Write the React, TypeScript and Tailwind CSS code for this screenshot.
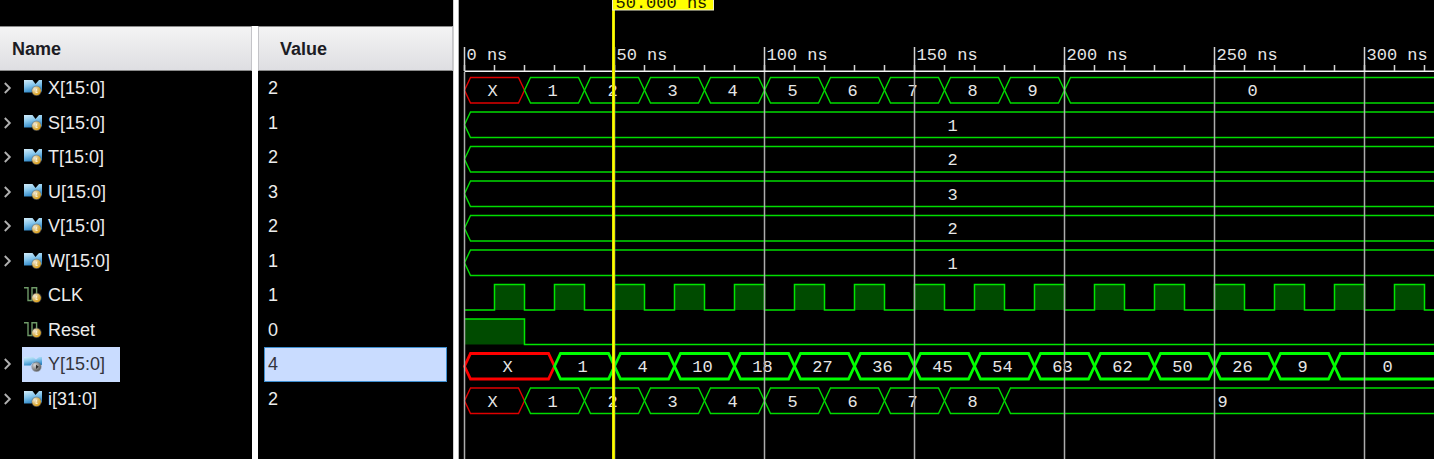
import { useState } from "react";

type Kind = "bus" | "output" | "scalar";
type Segment = [start: number, label: string];

interface Signal {
  name: string;
  value: string;
  kind: Kind;
  segments?: Segment[];
  pulses?: [number, number][];
}

const clockPulses = Array.from({ length: 17 }, (_, i): [number, number] => [10 + i * 20, 20 + i * 20]);

const signals: Signal[] = [
  {
    name: "X[15:0]", value: "2", kind: "bus",
    segments: [[0, "X"], [20, "1"], [40, "2"], [60, "3"], [80, "4"], [100, "5"], [120, "6"], [140, "7"], [160, "8"], [180, "9"], [200, "0"]],
  },
  { name: "S[15:0]", value: "1", kind: "bus", segments: [[0, "1"]] },
  { name: "T[15:0]", value: "2", kind: "bus", segments: [[0, "2"]] },
  { name: "U[15:0]", value: "3", kind: "bus", segments: [[0, "3"]] },
  { name: "V[15:0]", value: "2", kind: "bus", segments: [[0, "2"]] },
  { name: "W[15:0]", value: "1", kind: "bus", segments: [[0, "1"]] },
  { name: "CLK", value: "1", kind: "scalar", pulses: clockPulses },
  { name: "Reset", value: "0", kind: "scalar", pulses: [[0, 20]] },
  {
    name: "Y[15:0]", value: "4", kind: "output",
    segments: [[0, "X"], [30, "1"], [50, "4"], [70, "10"], [90, "18"], [110, "27"], [130, "36"], [150, "45"], [170, "54"], [190, "63"], [210, "62"], [230, "50"], [250, "26"], [270, "9"], [290, "0"]],
  },
  {
    name: "i[31:0]", value: "2", kind: "bus",
    segments: [[0, "X"], [20, "1"], [40, "2"], [60, "3"], [80, "4"], [100, "5"], [120, "6"], [140, "7"], [160, "8"], [180, "9"]],
  },
];

// Time axis: 3px per nanosecond, starting a little inside the wave pane.
const ORIGIN = 5.5;
const VIEW_END = 326;
const FAR = 4000;
const ROW_TOP = 77.5;
const ROW_PITCH = 34.5;
const WAVE_HEIGHT = 25.5;
const CURSOR = 50;
const xAt = (ns: number) => ORIGIN + ns * 3;

function SignalIcon({ kind }: { kind: Kind }) {
  const badge = kind === "output" ? "url(#badge-gray)" : "url(#badge-gold)";
  return (
    <svg width="18" height="18" viewBox="0 0 18 18" className="shrink-0" aria-hidden="true">
      {kind === "bus" && <path d="M0 1H8.5L11.5 5L15 1H18V12.5H12L10.5 10L7.5 13.5H0Z" fill="url(#bus-blue)" />}
      {kind === "output" && <path d="M0 2H9L12 4.5L15 2H18V10H12L9 7.5L6.5 10.5H0Z" fill="url(#bus-blue)" />}
      {kind === "scalar" && <path d="M0 1.7H4V14.5H8V1.7H12.6V9" fill="none" stroke="#6f9a68" strokeWidth="1.4" />}
      <circle cx="12.5" cy="11.8" r="5.2" fill="#6f6f6f" opacity=".55" />
      <circle cx="12.5" cy="11.8" r="4.4" fill={badge} />
      {kind === "output" ? (
        <path d="M12 9.8L14.8 11.8L12 14Z" fill="#2c2c2c" />
      ) : (
        <path d="M12.8 9.6L11.8 13.4H13.6" stroke="#fff3cf" strokeWidth="1" fill="none" />
      )}
    </svg>
  );
}

function IconGradients() {
  return (
    <svg width="0" height="0" className="absolute" aria-hidden="true">
      <defs>
        <linearGradient id="bus-blue" x1="0" y1="0" x2=".35" y2="1">
          <stop offset="0" stopColor="#d4eefb" />
          <stop offset=".5" stopColor="#86c6ec" />
          <stop offset="1" stopColor="#2f88c8" />
        </linearGradient>
        <radialGradient id="badge-gold" cx=".3" cy=".3" r=".85">
          <stop offset="0" stopColor="#ece6d8" />
          <stop offset=".5" stopColor="#dcb860" />
          <stop offset="1" stopColor="#e09c08" />
        </radialGradient>
        <radialGradient id="badge-gray" cx=".3" cy=".3" r=".85">
          <stop offset="0" stopColor="#d8d8d8" />
          <stop offset="1" stopColor="#4c4c4c" />
        </radialGradient>
      </defs>
    </svg>
  );
}

function BusWave({ segments, top, bold }: { segments: Segment[]; top: number; bold: boolean }) {
  const bottom = top + WAVE_HEIGHT;
  const mid = (top + bottom) / 2;
  return (
    <g>
      {segments.map(([start, label], i) => {
        const last = i === segments.length - 1;
        const next = last ? VIEW_END + 0.7 : segments[i + 1][0];
        const x1 = xAt(start);
        const x2 = xAt(next);
        const unknown = label === "X";
        const d = last
          ? `M${FAR} ${top}H${x1 + 6}L${x1} ${mid}L${x1 + 6} ${bottom}H${FAR}`
          : `M${x1} ${mid}L${x1 + 6} ${top}H${x2 - 6}L${x2} ${mid}L${x2 - 6} ${bottom}H${x1 + 6}Z`;
        return (
          <g key={start}>
            <path
              d={d}
              fill="none"
              stroke={unknown ? (bold ? "#ff0000" : "#e00000") : bold ? "#00ff00" : "#00dc00"}
              strokeWidth={bold ? 2.8 : 1.4}
            />
            <text x={(x1 + x2) / 2 - 2} y={mid + 6} textAnchor="middle" fill="#e6e6e6">
              {label}
            </text>
          </g>
        );
      })}
    </g>
  );
}

function BitWave({ pulses, top }: { pulses: [number, number][]; top: number }) {
  const bottom = top + WAVE_HEIGHT;
  const line = pulses
    .map(([a, b]) => `${a === 0 ? `M${xAt(a)} ${top}` : `H${xAt(a)}V${top}`}H${xAt(b)}V${bottom}`)
    .join("");
  return (
    <g>
      {pulses.map(([a, b]) => (
        <rect key={a} x={xAt(a)} y={top} width={(b - a) * 3} height={WAVE_HEIGHT} fill="#004b00" />
      ))}
      <path
        d={`${pulses[0][0] === 0 ? "" : `M${ORIGIN} ${bottom}`}${line}H${FAR}`}
        fill="none"
        stroke="#00e600"
        strokeWidth="1.5"
      />
    </g>
  );
}

function WavePane({ selected }: { selected: string }) {
  const ticks = Array.from({ length: 33 }, (_, i) => i * 10);
  const majors = ticks.filter((t) => t % 50 === 0);
  const cursorX = xAt(CURSOR) - 1;
  return (
    <svg
      className="block h-full w-full font-['Liberation_Mono',monospace] text-[17px]"
      role="img"
      aria-label="Waveforms"
    >
      <path d={`M${ORIGIN} 71.2H${FAR}`} stroke="#f4f4f4" strokeWidth="1.5" />
      {ticks.map((t) => (
        <path key={t} d={`M${xAt(t)} 65V71`} stroke="#d4d4d4" strokeWidth="1.5" />
      ))}
      {majors.map((t) => (
        <text key={t} x={xAt(t) + 2} y="60" fill="#e6e6e6">
          {t} ns
        </text>
      ))}
      {signals.map((s, i) => {
        const top = ROW_TOP + i * ROW_PITCH;
        return s.segments ? (
          <BusWave key={s.name} segments={s.segments} top={top} bold={s.name === selected} />
        ) : (
          <BitWave key={s.name} pulses={s.pulses ?? []} top={top} />
        );
      })}
      {majors.map((t) => (
        <g key={t} strokeWidth="1.5">
          <line x1={xAt(t)} x2={xAt(t)} y1="47" y2="71" stroke="#d4d4d4" />
          <line x1={xAt(t)} x2={xAt(t)} y1="72" y2="100%" stroke="#acacac" />
        </g>
      ))}
      <line x1={cursorX} x2={cursorX} y1="0" y2="100%" stroke="#d8d800" strokeWidth="3" />
      <line x1={cursorX} x2={cursorX} y1="0" y2="100%" stroke="#ffff00" strokeWidth="1.6" />
      <rect x={cursorX - 1} y="-12" width="101" height="22" fill="#ffff00" stroke="#f0f0c8" />
      <text x={cursorX + 2} y="8" fill="#202000">
        50.000 ns
      </text>
    </svg>
  );
}

const columns = "grid grid-cols-[252px_minmax(0,1fr)]";
const headCell =
  "flex items-center border-y border-t-[#8a8a8a] border-b-[#8a8a8a] border-r border-r-[#c4c4c8] bg-linear-to-b from-[#f4f4f4] to-[#dedee2] text-left text-lg font-bold text-[#1c1c24]";

export default function App() {
  const [selected, setSelected] = useState("Y[15:0]");
  return (
    <main className="flex min-h-screen bg-black font-['Liberation_Sans',Arial,sans-serif] text-lg leading-none text-[#ececec]">
      <IconGradients />
      <section className="flex w-[453px] shrink-0 flex-col pt-[26px]">
        <table className="flex flex-col">
          <thead className="block">
            <tr className={`${columns} h-[45px]`}>
              <th scope="col" className={`${headCell} pl-3`}>Name</th>
              <th scope="col" className="flex border-l-6 border-white">
                <span className={`${headCell} flex-1 border-l border-l-[#c4c4c8] pl-[21px]`}>Value</span>
              </th>
            </tr>
          </thead>
          <tbody className="grid h-[345px] grid-rows-10">
            {signals.map((s) => {
              const active = s.name === selected;
              return (
                <tr key={s.name} className={columns} onClick={() => setSelected(s.name)}>
                  <td className="flex items-center">
                    <span className="flex w-[22px] shrink-0 pl-1">
                      {s.kind !== "scalar" && (
                        <button type="button" aria-label={`Expand ${s.name}`}>
                          <svg width="8" height="12" viewBox="0 0 8 12" fill="none" stroke="#b0b0b0" strokeWidth="1.9">
                            <path d="M0.8 1L5.8 6L0.8 11" />
                          </svg>
                        </button>
                      )}
                    </span>
                    <span className={`flex h-full items-center gap-1.5 pl-0.5 pr-[15px] ${active ? "bg-[#c9dcff] text-[#34343c]" : ""}`}>
                      <SignalIcon kind={s.kind} />
                      {s.name}
                    </span>
                  </td>
                  <td className="flex border-l-6 border-white px-1.5">
                    <span
                      className={`flex flex-1 items-center border pl-[3px] ${active ? "border-[#3f8fd0] bg-[#c9dcff] text-[#34343c]" : "border-transparent"}`}
                    >
                      {s.value}
                    </span>
                  </td>
                </tr>
              );
            })}
          </tbody>
        </table>
        <div className={`${columns} flex-1`}>
          <div />
          <div className="border-l-6 border-white" />
        </div>
      </section>
      <div className="w-1.5 shrink-0 border-x border-l-[#d0d0d0] border-r-[#b0b0b0] bg-white" />
      <section className="min-w-0 flex-1 overflow-hidden">
        <WavePane selected={selected} />
      </section>
    </main>
  );
}
